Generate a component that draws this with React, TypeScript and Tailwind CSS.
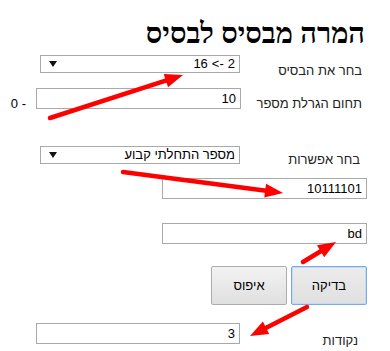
import React from "react";

function Arrow({ x1, y1, x2, y2 }: { x1: number; y1: number; x2: number; y2: number }) {
  const dx = x2 - x1;
  const dy = y2 - y1;
  const len = Math.hypot(dx, dy);
  const ux = dx / len;
  const uy = dy / len;
  const hl = 18;
  const hw = 7;
  const bx = x2 - ux * hl;
  const by = y2 - uy * hl;
  const px = -uy;
  const py = ux;
  const pts = `${x2},${y2} ${bx + px * hw},${by + py * hw} ${bx - px * hw},${by - py * hw}`;
  return (
    <g>
      <line x1={x1} y1={y1} x2={bx + ux * 3} y2={by + uy * 3} stroke="#ff0000" strokeWidth={4.5} strokeLinecap="round" />
      <polygon points={pts} fill="#ff0000" />
    </g>
  );
}

function FakeSelect({ children }: { children: React.ReactNode }) {
  return (
    <div className="flex h-[18px] w-[200px] items-center justify-between border border-[#a9a9a9] bg-white pl-[8px] pr-[4px] text-black">
      {children}
      <svg width="8" height="6" viewBox="0 0 8 6">
        <polygon points="0,0 8,0 4,6" fill="#111" />
      </svg>
    </div>
  );
}

function Field({ value, w }: { value: string; w: string }) {
  return (
    <div className={`flex h-[21px] items-center border border-[#a9a9a9] bg-white px-[4px] leading-[16px] text-black ${w}`}>
      <span dir="ltr">{value}</span>
    </div>
  );
}

export default function App() {
  return (
    <div
      dir="rtl"
      className="relative h-[351px] w-[390px] overflow-hidden bg-white font-['Liberation_Sans',Arial,sans-serif] text-[13px] leading-[16px] text-[#222]"
    >
      <h1 className="mt-[15px] h-[36px] pr-[25px] font-['Liberation_Serif','Times_New_Roman',serif] text-[29px] font-bold leading-[36px] text-black">
        המרה מבסיס לבסיס
      </h1>

      <div className="mt-[4px] flex h-[33px] items-start pr-[28px]">
        <div className="mt-[8px] w-[122px]">בחר את הבסיס</div>
        <FakeSelect>
          <span dir="ltr" className="flex gap-[4px] leading-[16px]">
            <span>16</span>
            <span>&lt;-</span>
            <span>2</span>
          </span>
        </FakeSelect>
      </div>

      <div className="flex h-[58px] items-start pr-[28px]">
        <div className="mt-[8px] w-[121px]">תחום הגרלת מספר</div>
        <Field value="10" w="w-[205px]" />
        <span dir="ltr" className="mr-[10px] mt-[8px] text-black">0 -</span>
      </div>

      <div className="flex h-[32px] items-start pr-[30px]">
        <div className="mt-[6px] w-[120px]">בחר אפשרות</div>
        <FakeSelect>
          <span className="leading-[16px]">מספר התחלתי קבוע</span>
        </FakeSelect>
      </div>

      <div className="flex h-[45px] items-start pr-[23px]">
        <Field value="10111101" w="w-[205px]" />
      </div>

      <div className="flex h-[43px] items-start pr-[23px]">
        <Field value="bd" w="w-[205px]" />
      </div>

      <div className="flex h-[57px] items-start gap-[4px] pr-[23px]">
        <button className="h-[39px] w-[76px] rounded-[2px] border border-[#7aaae6] bg-gradient-to-b from-[#ececec] to-[#e0e0e0] text-[13px] text-black shadow-[inset_0_0_0_1px_#c5dbf5]">
          בדיקה
        </button>
        <button className="h-[39px] w-[76px] rounded-[2px] border border-[#acacac] bg-gradient-to-b from-[#f2f2f2] to-[#e0e0e0] text-[13px] text-black">
          איפוס
        </button>
      </div>

      <div className="flex h-[28px] items-start pr-[32px]">
        <div className="mt-[10px] w-[118px]">נקודות</div>
        <Field value="3" w="w-[204px]" />
      </div>

      <svg className="pointer-events-none absolute left-0 top-0" width="390" height="351" viewBox="0 0 390 351">
        <Arrow x1={50} y1={118} x2={183} y2={75} />
        <Arrow x1={123} y1={172} x2={283} y2={193} />
        <Arrow x1={303} y1={262} x2={336} y2={242} />
        <Arrow x1={307} y1={307} x2={250} y2={336} />
      </svg>
    </div>
  );
}
